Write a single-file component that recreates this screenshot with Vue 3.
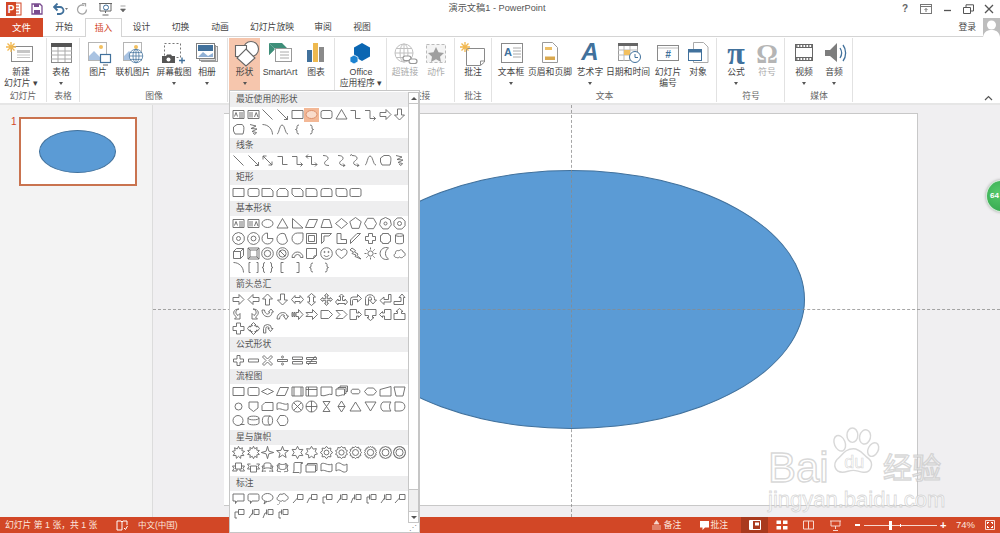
<script setup>
const c = (r, cx = 6.5, cy = 6.5, ry = r) => `M${cx - r} ${cy}a${r} ${ry} 0 1 0 ${2 * r} 0a${r} ${ry} 0 1 0 ${-2 * r} 0Z`
const poly = (n, r, rot = -90, cx = 6.5, cy = 6.5) => {
  let d = ''
  for (let i = 0; i < n; i++) {
    const a = ((rot + (360 * i) / n) * Math.PI) / 180
    d += `${i ? 'L' : 'M'}${(cx + r * Math.cos(a)).toFixed(2)} ${(cy + r * Math.sin(a)).toFixed(2)}`
  }
  return d + 'Z'
}
const star = (n, R, r) => {
  let d = ''
  for (let i = 0; i < n * 2; i++) {
    const a = ((-90 + (180 * i) / n) * Math.PI) / 180
    const q = i % 2 ? r : R
    d += `${i ? 'L' : 'M'}${(6.5 + q * Math.cos(a)).toFixed(2)} ${(6.5 + q * Math.sin(a)).toFixed(2)}`
  }
  return d + 'Z'
}
const S = {
  text: 'M1 2.5H12V10.5H1ZM2.5 8.5L4 4.5L5.5 8.5M7 5H11M7 7H11M7 9H11',
  vtext: 'M1 2.5H12V10.5H1ZM3 4V9.5M5 4V9.5M7.5 9L9.2 4.5L11 9',
  line: 'M1.5 1.5L11.5 11.5',
  arrow: 'M1.5 1.5L11.5 11.5M11.5 8V11.5H8',
  dbl: 'M2 2L11 11M2 5.5V2H5.5M11 7.5V11H7.5',
  elbow: 'M1.5 2.5H6.5V10.5H11.5',
  elbowa: 'M1 2.5H6V10.5H11.5M9.5 8.5L11.5 10.5L9.5 12.5',
  elbowd: 'M3 .5L1 2.5L3 4.5M1 2.5H6.5V10.5H12M10 8.5L12 10.5L10 12.5',
  curvec: 'M3 1.5C9 1.5 9 5 6.5 6.5S3 11.5 9 11.5',
  curvea: 'M3 1.5C9 1.5 9 5 6.5 6.5S3 11.5 10 11.5M8 9.5L10 11.5L8 12.5',
  curved: 'M1 1.5L3 .5M3 1.5C9 1.5 9 5 6.5 6.5S3 11.5 10 11.5M8 9.5L10 11.5L8 12.5',
  rect: 'M1 2.5H12V10.5H1Z',
  round: 'M3 2.5H10Q12 2.5 12 4.5V8.5Q12 10.5 10 10.5H3Q1 10.5 1 8.5V4.5Q1 2.5 3 2.5Z',
  snip1: 'M1 2.5H9.5L12 5V10.5H1Z',
  snip2: 'M3.5 2.5H9.5L12 5V10.5H1V5Z',
  snip3: 'M1 2.5H9.5L12 5V10.5H3.5L1 8Z',
  rs1: 'M1 2.5H9Q12 2.5 12 5.5V10.5H1Z',
  rs2: 'M3.5 2.5H9.5Q12 2.5 12 5V10.5H1V5Q1 2.5 3.5 2.5Z',
  rs3: 'M1 2.5H9.5Q12 2.5 12 5V10.5H3.5Q1 10.5 1 8Z',
  ellipse: c(5.5, 6.5, 6.5, 4),
  tri: 'M6.5 1.5L12 11H1Z',
  rtri: 'M1.5 1.5L12 11H1.5Z',
  para: 'M4 2.5H12.5L9 10.5H.5Z',
  trap: 'M3.5 2.5H9.5L12 10.5H1Z',
  dia: 'M6.5 1.5L12.5 6.5L6.5 11.5L.5 6.5Z',
  pent: poly(5, 6),
  hex: poly(6, 6, 0),
  c7: poly(7, 6) + c(1.5),
  c8: poly(8, 6, -67.5) + c(2),
  c10: poly(10, 6) + c(2),
  c12: poly(12, 6) + c(2.4),
  pie: 'M6.5 1A5.5 5.5 0 1 0 12 6.5H6.5Z',
  chord: 'M9 2A5.5 5.5 0 1 0 11.5 9Z',
  tear: 'M12 1V6.5A5.5 5.5 0 1 1 6.5 1Z',
  frame: 'M1.5 1.5H11.5V11.5H1.5ZM3.5 3.5H9.5V9.5H3.5Z',
  halff: 'M1.5 1.5H11.5L9 4H4V9L1.5 11.5Z',
  ell: 'M2 1.5H6V7.5H11.5V11.5H2Z',
  stripe: 'M1.5 8L8 1.5H11.5L1.5 11.5Z',
  cross: 'M4.5 1.5H8.5V4.5H11.5V8.5H8.5V11.5H4.5V8.5H1.5V4.5H4.5Z',
  plaque: 'M3.5 1.5H9.5Q9.5 3.5 11.5 3.5V9.5Q9.5 9.5 9.5 11.5H3.5Q3.5 9.5 1.5 9.5V3.5Q3.5 3.5 3.5 1.5Z',
  can: 'M2.5 3V10.5C2.5 12.2 10.5 12.2 10.5 10.5V3C10.5 1.2 2.5 1.2 2.5 3C2.5 4.8 10.5 4.8 10.5 3',
  cube: 'M1.5 4.5L4.5 1.5H11.5V8.5L8.5 11.5H1.5ZM1.5 4.5H8.5V11.5M8.5 4.5L11.5 1.5',
  bevel: 'M1 1H12V12H1ZM3 3H10V10H3ZM1 1L3 3M12 1L10 3M1 12L3 10M12 12L10 10',
  donut: c(5.8) + c(3.2),
  nosym: c(5.8) + c(3.6) + 'M4 4L9 9',
  arcb: 'M1 10.5A5.5 5.5 0 0 1 12 10.5H9.5A3 3 0 0 0 3.5 10.5Z',
  fold: 'M1.5 1.5H11.5V8.5L8.5 11.5H1.5ZM8.5 11.5L9 9L11.5 8.5',
  smile: c(5.8) + c(.6, 4.5, 5) + c(.6, 8.5, 5) + 'M3.8 8C5 10 8 10 9.2 8',
  heart: 'M6.5 11.5C1 8 .5 5.5 1.2 3.8C2.2 1.5 5.5 1.5 6.5 4C7.5 1.5 10.8 1.5 11.8 3.8C12.5 5.5 12 8 6.5 11.5Z',
  bolt: 'M3 1L6.5 3.5L5.5 5L9 7L8 8.5L12 12L6 9.5L7 8L3 6.5L4.5 5L1 3Z',
  sun: c(2.6) + 'M6.5 .5V2.5M6.5 10.5V12.5M.5 6.5H2.5M10.5 6.5H12.5M2.3 2.3L3.7 3.7M9.3 9.3L10.7 10.7M2.3 10.7L3.7 9.3M9.3 3.7L10.7 2.3',
  moon: 'M9.5 1A6 6 0 1 0 9.5 12A6.5 6.5 0 0 1 9.5 1Z',
  cloud: 'M3.5 10.5C.5 10.5 .5 7 2.5 6.5C2 3.5 5 3 6 4C7 2 10 2.5 10 5C12.5 5 13 9 10.5 9.5C9.5 11 7.5 11 6.5 10C5.5 11 4.5 11 3.5 10.5Z',
  arc: 'M1.5 1.5C7 1.5 11.5 6 11.5 11.5',
  bpair: 'M3.5 1.5H2V11.5H3.5M9.5 1.5H11V11.5H9.5',
  brpair: 'M4 1.5Q2.5 1.5 2.5 3V5Q2.5 6.5 1 6.5Q2.5 6.5 2.5 8V10Q2.5 11.5 4 11.5M9 1.5Q10.5 1.5 10.5 3V5Q10.5 6.5 12 6.5Q10.5 6.5 10.5 8V10Q10.5 11.5 9 11.5',
  lb: 'M7.5 1.5H5V11.5H7.5',
  rb: 'M5.5 1.5H8V11.5H5.5',
  lc: 'M8 2Q6 2 6 3.5V5Q6 6.5 4.5 6.5Q6 6.5 6 8V9.5Q6 11 8 11',
  rc: 'M5 2Q7 2 7 3.5V5Q7 6.5 8.5 6.5Q7 6.5 7 8V9.5Q7 11 5 11',
  curve: 'M1 11C3 11 3.5 2 6 2C9 2 9 11 12 11',
  free: 'M1.5 4L5 1.5H10C12.5 2.5 12 6 11.5 9L11 11H3L1.5 8Z',
  scrib: 'M3 1.5L9 3L4 5.5L10 6L5 8.5L9.5 9.5L8 11.5L6 10',
  ar: 'M1 4.5H7V1.5L12 6.5L7 11.5V8.5H1Z',
  al: 'M12 4.5H6V1.5L1 6.5L6 11.5V8.5H12Z',
  au: 'M4.5 12V6H1.5L6.5 1L11.5 6H8.5V12Z',
  ad: 'M4.5 1V7H1.5L6.5 12L11.5 7H8.5V1Z',
  alr: 'M.5 6.5L4 2.5V4.5H9V2.5L12.5 6.5L9 10.5V8.5H4V10.5Z',
  aud: 'M6.5 .5L10.5 4H8.5V9H10.5L6.5 12.5L2.5 9H4.5V4H2.5Z',
  aq: 'M6.5 .5L8.5 2.8H7.3V5.7H10.2V4.5L12.5 6.5L10.2 8.5V7.3H7.3V10.2H8.5L6.5 12.5L4.5 10.2H5.7V7.3H2.8V8.5L.5 6.5L2.8 4.5V5.7H5.7V2.8H4.5Z',
  alru: 'M6.5 1L9 3.5H7.5V7.5H10V6L12.5 9L10 12V10.5H3V12L.5 9L3 6V7.5H5.5V3.5H4Z',
  abent: 'M1.5 12V6.5Q1.5 4 4 4H8.5V1.5L12.5 5.5L8.5 9V6.5H4.5Q3.5 6.5 3.5 7.5V12Z',
  auturn: 'M1.5 12V5.5C1.5 .5 10.5 .5 10.5 5.5V7H12.5L9 11L5.5 7H7.5V5.5C7.5 3.5 4.5 3.5 4.5 5.5V12Z',
  alu: 'M12 1.5V9H5V11.5L1 7.5L5 4V6.5H9.5V1.5Z',
  abu: 'M1 8.5H8V4.5H6L9 1L12 4.5H10.5V11.5H1Z',
  acr: 'M7 1C3 2 3 6 6 7.5L8 5.5V11H2.5L4.5 9C0 6 1 1 7 1Z',
  acl: 'M6 1C10 2 10 6 7 7.5L5 5.5V11H10.5L8.5 9C13 6 12 1 6 1Z',
  acu: 'M1 2C1 10 11 11 11 4H12.5L10 1L7.5 4H8.5C8.5 7 4 7 3.5 2Z',
  acd: 'M1 11C1 3 11 3 11 8H12.5L10 11.5L7.5 8H8.5C8.5 6 4 6 3.5 11Z',
  astr: 'M1 4.5H2V8.5H1ZM3 4.5H4V8.5H3ZM5 4.5H7.5V1.5L12 6.5L7.5 11.5V8.5H5Z',
  anot: 'M1 4.5H7.5V1.5L12.5 6.5L7.5 11.5V8.5H1L3 6.5Z',
  home: 'M1 2.5H8.5L12.5 6.5L8.5 10.5H1Z',
  chev: 'M1 2.5H8L12 6.5L8 10.5H1L5 6.5Z',
  cr: 'M1 1.5H7.5V5H9.5V3.5L12.5 6.5L9.5 9.5V8H7.5V11.5H1Z',
  cd: 'M1 1.5H12V7.5H8.5V9.5H10L6.5 12.5L3 9.5H4.5V7.5H1Z',
  cl: 'M12 1.5H5.5V5H3.5V3.5L.5 6.5L3.5 9.5V8H5.5V11.5H12Z',
  cu: 'M1 5.5H4.5V3.5H3L6.5 .5L10 3.5H8.5V5.5H12V11.5H1Z',
  plusb: 'M4.5 1H8.5V4.5H12V8.5H8.5V12H4.5V8.5H1V4.5H4.5Z',
  cq: 'M6.5 .5L9 3H7.8V4H9.5V5H10.3V3.8L12.5 6.5L10.3 9.2V8H9.5V9.5H7.8V10H9L6.5 12.5L4 10H5.2V9.5H3.5V8H2.7V9.2L.5 6.5L2.7 3.8V5H3.5V4H5.2V3H4Z',
  circ: 'M2.5 11V6.5A4 4 0 0 1 10.5 6.5H12L9.5 9.5L7 6.5H8.2A1.7 1.7 0 0 0 4.8 6.5V11Z',
  eplus: 'M5 1.5H8V5H11.5V8H8V11.5H5V8H1.5V5H5Z',
  eminus: 'M1.5 5H11.5V8H1.5Z',
  etimes: 'M3 1.5L6.5 5L10 1.5L11.5 3L8 6.5L11.5 10L10 11.5L6.5 8L3 11.5L1.5 10L5 6.5L1.5 3Z',
  ediv: 'M1.5 5.5H11.5V7.5H1.5Z' + c(1, 6.5, 3) + c(1, 6.5, 10),
  eeq: 'M1.5 3H11.5V5.5H1.5ZM1.5 7.5H11.5V10H1.5Z',
  ene: 'M1.5 3.5H11.5V5.5H1.5ZM1.5 7.5H11.5V9.5H1.5ZM3 11L10.5 2',
  falt: 'M2.5 2.5H10.5Q12 2.5 12 4V9Q12 10.5 10.5 10.5H2.5Q1 10.5 1 9V4Q1 2.5 2.5 2.5Z',
  fdia: 'M6.5 3.5L12.5 6.5L6.5 9.5L.5 6.5Z',
  fpre: 'M1 2H12V11H1ZM3 2V11M10 2V11',
  fint: 'M1 2H12V11H1ZM1 4.5H12M3.5 2V11',
  fdoc: 'M1 2H12V9.5C9 8 5 12 1 10.5Z',
  fmulti: 'M1 4H9.5V10C7 9 4 12 1 10.5ZM3 4V2.5H11V8.5H9.5M5 2.5V1H12.5V6.5H11',
  fterm: 'M4 4.2H9C11.5 4.2 11.5 8.8 9 8.8H4C1.5 8.8 1.5 4.2 4 4.2Z',
  fprep: 'M3.5 3H9.5L12.5 6.5L9.5 10H3.5L.5 6.5Z',
  fmin: 'M1 4.5L12 1.5V11H1Z',
  fman: 'M1 2H12L10 11H3Z',
  fcon: c(3.5),
  foff: 'M2 2H11V8L6.5 11.5L2 8Z',
  fcard: 'M4 2.5H12V10.5H1V5.5Z',
  ftape: 'M1 3.5C4 1 9 6 12 3.5V9.5C9 12 4 7 1 9.5Z',
  fsum: c(5.5) + 'M2.6 2.6L10.4 10.4M10.4 2.6L2.6 10.4',
  for: c(5.5) + 'M1 6.5H12M6.5 1V12',
  fcol: 'M3 1.5H10L3 11.5H10Z',
  fsort: 'M6.5 1L10 6.5L6.5 12L3 6.5ZM3 6.5H10',
  fext: 'M6.5 2L12 11H1Z',
  fmer: 'M1 2H12L6.5 11Z',
  fsto: 'M4 2H12C10 4 10 9 12 11H4C1 9 1 4 4 2Z',
  fdel: 'M2 2H7C13.5 2 13.5 11 7 11H2Z',
  fq: c(5, 6, 6.5) + 'M8 10.5H12.5',
  fdisk: 'M1 4C1 1.5 12 1.5 12 4V9C12 11.5 1 11.5 1 9ZM1 4C1 6.5 12 6.5 12 4',
  fdir: 'M4 2H9C12.5 2 12.5 11 9 11H4C.5 11 .5 2 4 2ZM9 2C6.5 2 6.5 11 9 11',
  fdisp: 'M4 1.5H8.5C13 3 13 10 8.5 11.5H4L1 6.5Z',
  ex1: star(9, 6.2, 3.8),
  ex2: star(10, 6.2, 4),
  s4: star(4, 6.2, 1.9),
  s5: star(5, 6.2, 2.6),
  s6: star(6, 6.2, 3.4),
  s7: star(7, 6.2, 3.8),
  s8: star(8, 6.2, 4.4) + c(2.4),
  s10: star(10, 6.2, 4.8) + c(2.6),
  s12: star(12, 6.2, 5) + c(3),
  s16: star(16, 6.2, 5.2) + c(3.2),
  s24: star(24, 6.2, 5.4) + c(3.4),
  s32: star(32, 6.2, 5.4) + c(3.6),
  rib1: 'M3.5 2H9.5V8H3.5ZM3.5 5H.5L2 7.5L.5 10H5V8M9.5 5H12.5L11 7.5L12.5 10H8V8',
  rib2: 'M3.5 5H9.5V11H3.5ZM3.5 3H.5L2 5.5L.5 8H3.5M9.5 3H12.5L11 5.5L12.5 8H9.5',
  rib3: 'M3 3C3 1.5 10 1.5 10 3V8C10 6.5 3 6.5 3 8ZM3 5H1L2 8L1 10.5C3 9.5 4 10.5 5 10M10 5H12L11 8L12 10.5C10 9.5 9 10.5 8 10',
  rib4: 'M3 7C3 9 10 9 10 7V2C10 4 3 4 3 2ZM3 4H1L2 7L1 10C3 11 4 10 5 11M10 4H12L11 7L12 10C10 11 9 10 8 11',
  sv: 'M4 1.5H11.5V2.5H10V11C10 12.5 8.5 12.5 8 11.5H2C2.5 11 3 10 3 9V2.5C3 1.8 3.5 1.5 4 1.5Z',
  sh: 'M1 4H2.5V2.5H12V9.5H10.5V11H1ZM2.5 4H10.5V9.5',
  wave: 'M1 3C4 .5 8 5.5 12 3V10C8 12.5 4 7.5 1 10Z',
  wave2: 'M1 3C3 1.5 4.5 1.5 6.5 3S10 4.5 12 3V10C10 11.5 8.5 11.5 6.5 10S3 8.5 1 10Z',
  cal1: 'M1 2H12V9H5L3.5 11.5V9H1Z',
  cal2: 'M2.5 2H10.5Q12 2 12 3.5V7.5Q12 9 10.5 9H5L3.5 11.5V9H2.5Q1 9 1 7.5V3.5Q1 2 2.5 2Z',
  cal3: c(5.5, 6.5, 5.5, 4) + 'M4 9L3 12L6 9.5',
  cal4: 'M3 8.5C.5 8.5 .5 5 2.5 4.5C2.5 2 5 1.5 6 2.5C7 1 10 1.5 10 3.5C12.5 3.5 13 7.5 10.5 8C9.5 9.5 7.5 9.5 6.5 8.5C5.5 9.5 4 9.5 3 8.5ZM3 11H4M1.5 12.5H2.5',
  ln1: 'M6.5 2.5H12V7.5H6.5ZM6.5 6L2 11',
  ln2: 'M6.5 2.5H12V7.5H6.5ZM6.5 6H4.5L2 11',
  ln3: 'M6.5 2.5H12V7.5H6.5ZM6.5 5H3V11H5',
  ac1: 'M7 2.5H12V7.5H7ZM5.5 2.5V7.5M5.5 6L2 11',
  ac2: 'M7 2.5H12V7.5H7ZM5.5 2.5V7.5M5.5 6H4L2 11',
  ac3: 'M7 2.5H12V7.5H7ZM5.5 2.5V7.5M5.5 5H3V11H5',
  bd1: 'M7 2.5H12V7.5H7M7 2.5V7.5M5.5 2.5V7.5M5.5 6L2 11'
}
const sections = [
  { title: '最近使用的形状', items: ['text', 'vtext', 'line', 'arrow', 'rect', 'ellipse', 'round', 'tri', 'elbow', 'elbowa', 'ar', 'ad', 'free', 'scrib', 'arc', 'curve', 'lc', 'rc'] },
  { title: '线条', items: ['line', 'arrow', 'dbl', 'elbow', 'elbowa', 'elbowd', 'curvec', 'curvea', 'curved', 'curve', 'free', 'scrib'] },
  { title: '矩形', items: ['rect', 'round', 'snip1', 'snip2', 'snip3', 'rs1', 'rs2', 'rs3', 'falt'] },
  { title: '基本形状', items: ['text', 'vtext', 'ellipse', 'tri', 'rtri', 'para', 'trap', 'dia', 'pent', 'hex', 'c7', 'c8', 'c10', 'c12', 'pie', 'chord', 'tear', 'frame', 'halff', 'ell', 'stripe', 'cross', 'plaque', 'can', 'cube', 'bevel', 'donut', 'nosym', 'arcb', 'fold', 'smile', 'heart', 'bolt', 'sun', 'moon', 'cloud', 'arc', 'bpair', 'brpair', 'lb', 'rb', 'lc', 'rc'] },
  { title: '箭头总汇', items: ['ar', 'al', 'au', 'ad', 'alr', 'aud', 'aq', 'alru', 'abent', 'auturn', 'alu', 'abu', 'acr', 'acl', 'acu', 'acd', 'astr', 'anot', 'home', 'chev', 'cr', 'cd', 'cl', 'cu', 'plusb', 'cq', 'circ'] },
  { title: '公式形状', items: ['eplus', 'eminus', 'etimes', 'ediv', 'eeq', 'ene'] },
  { title: '流程图', items: ['rect', 'falt', 'fdia', 'para', 'fpre', 'fint', 'fdoc', 'fmulti', 'fterm', 'fprep', 'fmin', 'fman', 'fcon', 'foff', 'fcard', 'ftape', 'fsum', 'for', 'fcol', 'fsort', 'fext', 'fmer', 'fsto', 'fdel', 'fq', 'fdisk', 'fdir', 'fdisp'] },
  { title: '星与旗帜', items: ['ex1', 'ex2', 's4', 's5', 's6', 's7', 's8', 's10', 's12', 's16', 's24', 's32', 'rib1', 'rib2', 'rib3', 'rib4', 'sv', 'sh', 'wave', 'wave2'] },
  { title: '标注', items: ['cal1', 'cal2', 'cal3', 'cal4', 'ln1', 'ln2', 'ln3', 'ac1', 'ac2', 'ac3', 'bd1', 'ln1', 'ln3', 'ac1', 'ac2', 'ac3'] }
]
const sun = '<path d="M6 2v10M1 7h10M2.5 3.5l7 7M9.5 3.5l-7 7" stroke="#f2b84f" stroke-width="1.3" fill="none"/>'
const globe = (s, x = 12, y = 12) => `<g fill="#fff" stroke="${s}" stroke-width="1"><circle cx="${x}" cy="${y}" r="9"/><ellipse cx="${x}" cy="${y}" rx="4" ry="9"/><path d="M${x - 9} ${y}h18M${x} ${y - 9}v18M${x - 8} ${y - 4.5}h16M${x - 8} ${y + 4.5}h16" fill="none"/></g>`
const icons = {
  newslide: `<rect x="6.5" y="6.5" width="21" height="15" fill="#fff" stroke="#8a8a8a"/><rect x="12" y="10" width="13" height="3" fill="#c5c5c5"/><path d="M12 15h13M12 17.5h13" stroke="#c5c5c5"/>${sun}`,
  table: '<rect x="6.5" y="3.5" width="20" height="19" fill="#fff" stroke="#8a8a8a"/><rect x="6" y="3" width="21" height="4" fill="#555"/><path d="M6 11h21M6 15h21M6 19h21M13 7v15M20 7v15" stroke="#aaa"/>',
  pic: '<rect x="6.5" y="2.5" width="18" height="18" fill="#fff" stroke="#b5b5b5"/><path d="M7 20v-4l5-5 6 6 3-2 3 5z" fill="#a9c3e2"/><circle cx="19" cy="7" r="2" fill="#f2c060"/><rect x="18.5" y="14.5" width="10" height="8" fill="#fff" stroke="#41719c" stroke-width="1.2"/><path d="M21 25h5" stroke="#666"/>',
  online: `<rect x="6.5" y="2.5" width="18" height="18" fill="#fff" stroke="#b5b5b5"/><path d="M7 20v-4l5-5 6 6 3-2 3 5z" fill="#a9c3e2"/><circle cx="19" cy="7" r="2" fill="#f2c060"/><g transform="translate(10 7) scale(.75)">${globe('#41719c')}</g>`,
  screen: '<rect x="6.5" y="3.5" width="16" height="14" fill="none" stroke="#777" stroke-dasharray="2 2"/><path d="M4 16h4l1-1.5h4l1 1.5h3v7H4z" fill="#555"/><circle cx="10.5" cy="19.5" r="2" fill="#fff"/><path d="M24 17.5v6M21 20.5h6" stroke="#41719c" stroke-width="1.4"/>',
  album: '<rect x="10.5" y="6.5" width="16" height="15" fill="#eee" stroke="#9a9a9a"/><rect x="8.5" y="5.5" width="16" height="15" fill="#ddd" stroke="#9a9a9a"/><rect x="5.5" y="3.5" width="18" height="15" fill="#fff" stroke="#7f7f7f"/><rect x="7" y="5" width="15" height="6" fill="#41719c"/><path d="M7 17l5-5 5 4 5-3v4z" fill="#8fb0d5"/>',
  shapes: '<circle cx="22" cy="9" r="7.5" fill="#fff" stroke="#666" stroke-width="1.1"/><path d="M6.5 5.5h11v11h-11z" fill="#fff" stroke="#666" stroke-width="1.1"/><path d="M17 9l9 9-9 8-9-8z" fill="#fff" stroke="#666" stroke-width="1.1"/>',
  smart: '<path d="M5 3h13l5 5H10l-5-5zM5 15l5-5h-5z" fill="#3e8e79"/><path d="M5 3l6 6-6 6z" fill="#3e8e79"/><rect x="11.5" y="8.5" width="16" height="13" fill="#fff" stroke="#999"/><path d="M16 12h9M16 15h9M16 18h9" stroke="#aaa"/>',
  chart: '<rect x="7" y="10" width="5" height="12" fill="#41719c"/><rect x="13" y="3" width="5" height="19" fill="#eeb94f"/><rect x="19" y="7" width="5" height="15" fill="#8a8a8a"/>',
  office: '<path d="M17 3l8 4.5v9L17 21l-8-4.5v-9z" fill="#0b66b2"/><path d="M9 15l4 2.2v4.6L9 24l-4-2.2v-4.6z" fill="#1c83d1" stroke="#fff" stroke-width=".8"/>',
  link: `<g transform="translate(3 1)">${globe('#c0c0c0')}</g><rect x="14" y="16" width="8" height="4.5" rx="2.2" fill="#fff" stroke="#999" stroke-width="1.2"/><rect x="20" y="19" width="8" height="4.5" rx="2.2" fill="#fff" stroke="#999" stroke-width="1.2"/>`,
  action: '<rect x="6.5" y="4.5" width="19" height="18" fill="#f4f4f4" stroke="#bbb" stroke-dasharray="3 2"/><path d="M16 7l2.5 5.3 5.5.7-4 3.8 1 5.2-5-2.7-5 2.7 1-5.2-4-3.8 5.5-.7z" fill="#9f9f9f"/>',
  comment: `<path d="M9.5 8.5h18v13.5l-4 3.5h-14z" fill="#fff" stroke="#8a8a8a"/><path d="M23.5 25v-4h4" fill="none" stroke="#8a8a8a"/><g transform="translate(2 0)">${sun}</g>`,
  textbox: '<rect x="6.5" y="3.5" width="21" height="19" fill="#fff" stroke="#8a8a8a"/><text x="9" y="16" font-family="Liberation Sans" font-size="11" font-weight="700" fill="#41719c">A</text><path d="M18 8h8M18 11h8M18 14h8M18 17h8" stroke="#aaa"/>',
  header: '<path d="M8.5 2.5h10l5 5v15h-15z" fill="#fff" stroke="#9a9a9a"/><rect x="11" y="7" width="7" height="3" fill="#eec067"/><rect x="11" y="16.5" width="10" height="3.5" fill="#d9a84e"/>',
  wordart: '<text x="16" y="20" text-anchor="middle" font-family="Liberation Sans" font-style="italic" font-weight="700" font-size="24" fill="#41719c">A</text>',
  date: '<rect x="6.5" y="3.5" width="19" height="17" fill="#fff" stroke="#999"/><rect x="6" y="3" width="20" height="3" fill="#666"/><path d="M6 10h20M6 15h20M12 6v15M18 6v15" stroke="#bbb"/><rect x="12" y="10" width="6" height="5" fill="#f2c060"/><circle cx="23" cy="17" r="5.5" fill="#fff" stroke="#41719c"/><path d="M23 14v3.5h3" fill="none" stroke="#41719c"/>',
  number: '<rect x="5.5" y="5.5" width="21" height="15" fill="#fff" stroke="#8a8a8a"/><path d="M6 8h20" stroke="#bbb"/><text x="16" y="18" text-anchor="middle" font-family="Liberation Sans" font-style="italic" font-weight="700" font-size="10" fill="#41719c">#</text>',
  object: '<path d="M11.5 2.5h10l4.5 4.5v15.5h-14.5z" fill="#fff" stroke="#aaa"/><rect x="6.5" y="9.5" width="13" height="11" fill="#fff" stroke="#41719c"/><rect x="6" y="9" width="14" height="3.5" fill="#41719c"/>',
  pi: '<text x="16" y="24" text-anchor="middle" font-family="Liberation Serif" font-weight="700" font-size="32" fill="#41719c">π</text>',
  omega: '<text x="16" y="23" text-anchor="middle" font-family="Liberation Serif" font-weight="700" font-size="27" fill="#b5b5b5">Ω</text>',
  video: '<rect x="7.5" y="4.5" width="17" height="16" fill="#fff" stroke="#666"/><path d="M7 7.5h18M7 17.5h18" stroke="#666"/><path d="M8 6h16M8 19h16" stroke="#555" stroke-width="1.5" stroke-dasharray="1.5 1.5"/>',
  audio: '<path d="M7 10h5l7-7v19l-7-6H7z" fill="#7d7d7d"/><path d="M22 8c2 3 2 7 0 10M25 5c3.5 4.5 3.5 11.5 0 16" fill="none" stroke="#41719c" stroke-width="1.3"/>'
}
const groups = [
  { w: 47, pad: 0, label: '幻灯片', items: [{ w: 42, i: 'newslide', t: ['新建', '幻灯片 ▾'] }] },
  { w: 33, pad: 0, label: '表格', items: [{ w: 28, i: 'table', t: ['表格'], drop: 1 }] },
  { w: 148, pad: 1, label: '图像', items: [{ w: 34, i: 'pic', t: ['图片'] }, { w: 36, i: 'online', t: ['联机图片'] }, { w: 46, i: 'screen', t: ['屏幕截图'], drop: 1 }, { w: 20, i: 'album', t: ['相册'], drop: 1 }] },
  { w: 107, pad: 1, label: '', items: [{ w: 31, i: 'shapes', t: ['形状'], drop: 1, on: 1 }, { w: 40, i: 'smart', t: ['SmartArt'] }, { w: 32, i: 'chart', t: ['图表'] }] },
  { w: 52, pad: 2, label: '', items: [{ w: 48, i: 'office', t: ['Office', '应用程序 ▾'] }] },
  { w: 68, pad: 2, label: '链接', items: [{ w: 32, i: 'link', t: ['超链接'], off: 1 }, { w: 30, i: 'action', t: ['动作'], off: 1 }] },
  { w: 37, pad: 0, label: '批注', items: [{ w: 36, i: 'comment', t: ['批注'] }] },
  { w: 225, pad: 1, label: '文本', items: [{ w: 36, i: 'textbox', t: ['文本框'], drop: 1 }, { w: 42, i: 'header', t: ['页眉和页脚'] }, { w: 38, i: 'wordart', t: ['艺术字'], drop: 1 }, { w: 38, i: 'date', t: ['日期和时间'] }, { w: 42, i: 'number', t: ['幻灯片', '编号'] }, { w: 18, i: 'object', t: ['对象'] }] },
  { w: 68, pad: 1, label: '符号', items: [{ w: 36, i: 'pi', t: ['公式'], drop: 1 }, { w: 26, i: 'omega', t: ['符号'], off: 1 }] },
  { w: 68, pad: 1, label: '媒体', items: [{ w: 36, i: 'video', t: ['视频'], drop: 1 }, { w: 24, i: 'audio', t: ['音频'], drop: 1 }] }
]
const tabs = [
  { t: '开始', w: 42 }, { t: '插入', w: 37, on: 1 }, { t: '设计', w: 39 }, { t: '切换', w: 39 }, { t: '动画', w: 40 }, { t: '幻灯片放映', w: 64 }, { t: '审阅', w: 38 }, { t: '视图', w: 40 }
]
</script>

<template>
  <div class="win">
    <header class="titlebar">
      <div class="qat">
        <svg width="16" height="14" viewBox="0 0 16 14" class="qp"><rect x="5" y="1" width="10" height="12" fill="#fff" stroke="#d24726"/><path d="M9 4h4M9 7h4M9 10h4" stroke="#d24726"/><rect y="0" width="10" height="14" fill="#d24726"/><text x="5" y="11" text-anchor="middle" font-family="Liberation Sans" font-weight="700" font-size="10" fill="#fff">P</text></svg>
        <svg width="12" height="12" viewBox="0 0 12 12" class="qs"><path d="M1 1h8l2 2v8H1z" fill="#fff" stroke="#7a4d90" stroke-width="1.3"/><rect x="3" y="1" width="5" height="3" fill="#7a4d90"/><rect x="3" y="7" width="6" height="4" fill="#7a4d90"/></svg>
        <svg width="16" height="12" viewBox="0 0 16 12" class="qu"><path d="M1 4h6a3.5 3.5 0 0 1 0 7H4" fill="none" stroke="#41719c" stroke-width="1.8"/><path d="M4.5 .5L1 4l3.5 3.5" fill="none" stroke="#41719c" stroke-width="1.8"/><path d="M12 5h3l-1.5 2z" fill="#777"/></svg>
        <svg width="12" height="12" viewBox="0 0 12 12" class="qr"><path d="M8 2.5A4.5 4.5 0 1 0 10.5 6.5" fill="none" stroke="#a5a5a5" stroke-width="1.3"/><path d="M6 .5h3.5v3" fill="none" stroke="#a5a5a5" stroke-width="1.3"/></svg>
        <svg width="16" height="14" viewBox="0 0 16 14" class="qv"><path d="M1 1.5h13M2 2v7h11V2M7.5 9v2M4.5 13h6" fill="none" stroke="#666"/><circle cx="8" cy="5.5" r="2.5" fill="none" stroke="#41719c"/></svg>
        <svg width="6" height="8" viewBox="0 0 6 8" class="qc"><path d="M.5 1h5M.5 4h5l-2.5 3z" fill="#666" stroke="#666" stroke-width=".6"/></svg>
      </div>
      <div class="doc">演示文稿1 - PowerPoint</div>
      <div class="winbtns">
        <span class="help">?</span>
        <svg width="12" height="10" viewBox="0 0 12 10"><rect x=".5" y=".5" width="11" height="9" fill="none" stroke="#777"/><path d="M.5 2.5h11M6 8V4.5M4.5 6L6 4.5 7.5 6" fill="none" stroke="#777"/></svg>
        <svg width="11" height="10" viewBox="0 0 11 10"><path d="M2 6.5h7" stroke="#555" stroke-width="1.3"/></svg>
        <svg width="11" height="10" viewBox="0 0 11 10"><path d="M.5 3.5h7v6h-7zM3 3V.8h7.5V7H8" fill="none" stroke="#555"/></svg>
        <svg width="10" height="10" viewBox="0 0 10 10"><path d="M1 1l8 8M9 1l-8 8" stroke="#555" stroke-width="1.3"/></svg>
      </div>
    </header>

    <nav class="tabs">
      <div class="file">文件</div>
      <div v-for="t in tabs" :key="t.t" class="tab" :class="{ on: t.on }" :style="{ width: t.w + 'px' }">{{ t.t }}</div>
      <div class="login">登录</div>
      <svg class="avatar" width="17" height="19" viewBox="0 0 17 19"><rect width="17" height="19" fill="#bdbdbd"/><circle cx="8.5" cy="7" r="4.5" fill="#fff"/><path d="M0 19c1-6 5-7 8.5-7s7.5 1 8.5 7z" fill="#fff"/></svg>
    </nav>

    <section class="ribbon">
      <div v-for="(g, gi) in groups" :key="gi" class="group" :style="{ width: g.w + 'px', paddingLeft: g.pad + 'px' }">
        <div class="items">
          <div v-for="it in g.items" :key="it.i" class="item" :class="{ on: it.on, off: it.off }" :style="{ width: it.w + 'px' }">
            <svg class="ricon" width="32" height="28" viewBox="0 0 32 28" v-html="icons[it.i]"></svg>
            <span v-for="l in it.t" :key="l" class="lbl">{{ l }}</span>
            <span v-if="it.drop" class="drop"></span>
          </div>
        </div>
        <div class="glabel">{{ g.label }}</div>
      </div>
      <svg class="collapse" width="9" height="6" viewBox="0 0 9 6"><path d="M1 5l3.5-3.5L8 5" fill="none" stroke="#555" stroke-width="1.2"/></svg>
    </section>

    <main class="main">
      <aside class="thumbs">
        <span class="num">1</span>
        <div class="thumb"><div class="thumb-oval"></div></div>
      </aside>
      <div class="editor">
        <div class="slide">
          <div class="oval"></div>
        </div>
        <div class="guide-v"></div>
        <div class="guide-h"></div>
      </div>
    </main>

    <footer class="status">
      <span class="st-a">幻灯片 第 1 张，共 1 张</span>
      <svg class="st-book" width="12" height="11" viewBox="0 0 12 11"><path d="M1 1h4l1 1v8H1zM6 2l1-1h4v4M8 8l1.5 1.5L11.5 6" fill="none" stroke="#fff"/></svg>
      <span class="st-lang">中文(中国)</span>
      <span class="grow"></span>
      <svg width="9" height="10" viewBox="0 0 9 10"><path d="M4.5 .5L7 4H2zM0 6h9M0 8h9M0 10h9" fill="#f7d8cf" stroke="#f7d8cf" stroke-width=".8"/></svg>
      <span class="st-note">备注</span>
      <svg class="st-cm" width="9" height="9" viewBox="0 0 9 9"><path d="M0 0h9v6.5H5L2.5 9V6.5H0z" fill="#fff"/></svg>
      <span class="st-cmt">批注</span>
      <div class="view on"><svg width="12" height="10" viewBox="0 0 12 10"><path d="M.5.5h11v9H.5z" fill="none" stroke="#fff"/><rect x="1" y="1" width="3" height="8" fill="#fff"/><rect x="6" y="2.5" width="4" height="3" fill="#fff"/></svg></div>
      <div class="view"><svg width="12" height="10" viewBox="0 0 12 10"><path d="M.5.5h4.5v3.5H.5zM7 .5h4.5v3.5H7zM.5 6h4.5v3.5H.5zM7 6h4.5v3.5H7z" fill="#fff"/></svg></div>
      <div class="view"><svg width="11" height="10" viewBox="0 0 11 10"><path d="M.5 1h10v8H.5zM5.5 1v8" fill="none" stroke="#f7d8cf"/></svg></div>
      <div class="view"><svg width="11" height="11" viewBox="0 0 11 11"><path d="M0 1h11M1 1v5h9V1M5.5 6v3M3 10.5h5" fill="none" stroke="#f7d8cf"/></svg></div>
      <span class="zoom-minus"></span>
      <div class="slider"><span class="tick"></span><span class="knob"></span></div>
      <span class="zoom-plus">+</span>
      <span class="pct">74%</span>
      <svg class="fit" width="10" height="10" viewBox="0 0 10 10"><path d="M.5.5h9v9h-9z" fill="none" stroke="#f7d8cf"/><path d="M2 2h2v1H3v1H2zM8 2v2H7V3H6V2zM2 8V6h1v1h1v1zM8 8H6V7h1V6h1z" fill="#fff"/></svg>
    </footer>

    <div class="menu">
      <div class="menu-body">
        <div class="gallery">
          <div v-for="s in sections" :key="s.title" class="sec">
            <div class="sec-h">{{ s.title }}</div>
            <div class="sec-b">
              <div v-for="(n, i) in s.items" :key="i" class="cell" :class="{ hit: s.title === '最近使用的形状' && n === 'ellipse' }">
                <svg width="13" height="13" viewBox="0 0 13 13"><path :d="S[n]" /></svg>
              </div>
            </div>
          </div>
        </div>
        <div class="scroll">
          <div class="sbtn"><span class="up"></span></div>
          <div class="sthumb"></div>
          <div class="strack"></div>
          <div class="sbtn"><span class="down"></span></div>
        </div>
      </div>
      <div class="grip">⋰</div>
    </div>

    <div class="badge">64</div>

    <div class="mark">
      <span class="mk-bai">Bai</span>
      <svg class="mk-paw" width="56" height="56" viewBox="0 0 62 62">
        <g fill="rgba(255,255,255,.6)" stroke="rgba(190,190,190,.6)" stroke-width="1.6">
          <ellipse cx="13" cy="18" rx="6" ry="9" transform="rotate(-22 13 18)"/>
          <ellipse cx="27" cy="9" rx="6" ry="8"/>
          <ellipse cx="41" cy="11" rx="6" ry="8" transform="rotate(14 41 11)"/>
          <ellipse cx="50" cy="25" rx="5.5" ry="8" transform="rotate(28 50 25)"/>
          <path d="M28 24c8 0 11 7 17 11 6 5 3 16-6 15-5-.5-7-2-11-2-5 0-7 2-12 2-8 0-11-8-6-14 6-5 9-12 18-12z"/>
        </g>
        <text x="29" y="45" text-anchor="middle" font-family="Liberation Sans" font-size="20" fill="rgba(255,255,255,.6)" stroke="rgba(190,190,190,.6)" stroke-width=".7">du</text>
      </svg>
      <span class="mk-jy">经验</span>
      <span class="mk-url">jingyan.baidu.com</span>
    </div>
  </div>
</template>

<style>
html, body { margin: 0; padding: 0; background: #fff; }
</style>

<style scoped>
.win { position: relative; width: 1000px; height: 533px; overflow: hidden; display: flex; flex-direction: column; background: #fff; font-family: "Liberation Sans", "Noto Sans CJK SC", sans-serif; color: #444; font-size: 8.8px; line-height: 1; }
.titlebar { height: 18px; display: flex; align-items: center; position: relative; flex: none; }
.qat { display: flex; align-items: center; width: 340px; }
.qat svg { flex: none; }
.qp { margin-left: 6px; }
.qs { margin-left: 9px; }
.qu { margin-left: 10px; }
.qr { margin-left: 7px; }
.qv { margin-left: 10px; }
.qc { margin-left: 6px; }
.doc { width: 314px; text-align: center; font-size: 9.2px; color: #555; }
.winbtns { flex: 1; display: flex; align-items: center; justify-content: flex-end; gap: 10px; padding-right: 6px; }
.help { font-weight: 700; font-size: 10px; color: #666; margin-right: 2px; }
.tabs { height: 19px; flex: none; display: flex; align-items: stretch; border-bottom: 1px solid #d4d4d4; box-sizing: border-box; position: relative; }
.file { width: 43px; background: #d24726; color: #fff; display: flex; align-items: center; justify-content: center; margin-bottom: -1px; font-size: 9.5px; }
.tab { display: flex; align-items: center; justify-content: center; box-sizing: border-box; font-size: 8.8px; }
.tab.on { color: #d24726; background: #fff; border: 1px solid #d4d4d4; border-bottom: 0; margin-bottom: -1px; }
.login { margin-left: auto; align-self: center; margin-right: 7px; font-size: 8.8px; }
.avatar { align-self: flex-start; }
.ribbon { height: 68px; flex: none; display: flex; align-items: stretch; position: relative; border-bottom: 2px solid #e6e6e6; box-sizing: border-box; }
.group { position: relative; box-sizing: border-box; flex: none; border-right: 1px solid #e2e2e2; margin: 1px 0 1px; display: flex; flex-direction: column; }
.items { display: flex; height: 52px; flex: none; }
.item { flex: none; display: flex; flex-direction: column; align-items: center; overflow: visible; height: 52px; white-space: nowrap; }
.item.on { background: #f6c6ad; }
.item.off .lbl { color: #aaa; }
.ricon { flex: none; margin: 2px -10px -1px; overflow: visible; display: block; }
.lbl { display: block; font-size: 8.8px; line-height: 11px; text-align: center; }
.drop { width: 0; height: 0; border: 2px solid transparent; border-top: 3px solid #555; margin-top: 4px; }
.glabel { height: 12px; line-height: 13px; text-align: center; font-size: 8.8px; color: #666; }
.collapse { position: absolute; right: 7px; top: 58px; }
.main { flex: 1; min-height: 0; display: flex; }
.thumbs { width: 141px; flex: none; border-right: 1px solid #dcdcdc; background: #f3f3f3; display: flex; align-items: flex-start; padding: 11px 0 0 11px; }
.num { color: #d24726; font-size: 10px; width: 8px; flex: none; line-height: 12px; }
.thumb { margin-top: 1px; width: 113.5px; height: 64.5px; background: #fff; border: 2.5px solid #c9734f; display: flex; align-items: center; justify-content: center; }
.thumb-oval { width: 77px; height: 43px; border-radius: 50%; background: #5b9bd5; border: 1px solid #41719c; box-sizing: border-box; }
.editor { flex: 1; position: relative; background: #f0eff1; overflow: hidden; }
.slide { position: relative; width: 693px; height: 391px; margin: 8px 0 0 71px; background: #fff; border: 1px solid #c8c8c8; border-left: 0; }
.oval { position: absolute; left: 113px; top: 56px; width: 468px; height: 259px; border-radius: 50%; background: #5b9bd5; border: 1px solid #41719c; box-sizing: border-box; }
.guide-v { position: absolute; left: 418px; top: 0; bottom: 0; border-left: 1px dashed #8a8a8a; opacity: .75; }
.guide-h { position: absolute; left: 0; right: 0; top: 204px; border-top: 1px dashed #8a8a8a; opacity: .75; }
.status { height: 16px; flex: none; background: #d24726; color: #fbe6df; display: flex; align-items: center; font-size: 8.8px; padding-left: 5px; white-space: nowrap; }
.st-a { width: 111px; }
.st-book { margin-right: 10px; }
.st-lang { width: 40px; font-size: 8.5px; }
.grow { flex: 1; }
.st-note { margin: 0 19px 0 3px; }
.st-cmt { margin: 0 13px 0 0; padding-left: 1px; }
.view { width: 27px; height: 16px; display: flex; align-items: center; justify-content: center; flex: none; }
.view.on { background: #a93a1e; }
.zoom-minus { width: 5px; height: 1.5px; background: #fff; margin-left: 6px; }
.slider { position: relative; width: 73px; height: 1px; background: #f7d8cf; margin-left: 4px; }
.knob { position: absolute; left: 25px; top: -4px; width: 3px; height: 9px; background: #fff; }
.tick { position: absolute; left: 36px; top: -1px; width: 1px; height: 3px; background: #fff; }
.zoom-plus { color: #fff; font-size: 11px; font-weight: 700; margin-left: 3px; width: 8px; }
.pct { margin-left: 8px; width: 24px; color: #fbe6df; font-size: 9.5px; }
.fit { margin: 0 5px; }
.menu { position: absolute; left: 229px; top: 90px; width: 191px; height: 443px; box-sizing: border-box; background: #fff; border: 1px solid #c6c6c6; display: flex; flex-direction: column; z-index: 2; }
.menu-body { flex: 1; min-height: 0; display: flex; }
.gallery { width: 178px; padding-top: 1px; flex: none; }
.sec-h { height: 15px; background: #eeeeef; padding-left: 6px; display: flex; align-items: center; font-size: 8.8px; color: #555; }
.sec-b { display: grid; grid-template-columns: repeat(12, 14.7px); grid-auto-rows: 14.7px; padding: .5px 0 1.25px 1px; }
.cell { display: flex; align-items: center; justify-content: center; }
.cell svg { fill: none; stroke: #666; stroke-width: .9; overflow: visible; }
.cell.hit { background: #f3b896; }
.cell.hit svg { fill: #f9dccb; stroke: #d98b66; }
.scroll { width: 11px; border-left: 1px solid #c6c6c6; border-right: 1px solid #c6c6c6; display: flex; flex-direction: column; box-sizing: border-box; margin-top: 1px; flex: none; }
.sbtn { height: 10px; border: 1px solid #c6c6c6; margin: 0 -1px; display: flex; align-items: center; justify-content: center; background: #fff; flex: none; }
.up { border: 3px solid transparent; border-bottom: 3px solid #555; border-top: 0; }
.down { border: 3px solid transparent; border-top: 3px solid #555; border-bottom: 0; }
.sthumb { height: 385px; border-bottom: 1px solid #c6c6c6; flex: none; }
.strack { flex: 1; background: #f0f0f0; }
.grip { height: 9px; text-align: right; font-size: 8px; line-height: 9px; color: #888; padding-right: 2px; flex: none; }
.badge { position: absolute; left: 986px; top: 180px; width: 30px; height: 32px; border-radius: 50%; background: radial-gradient(circle at 40% 40%, #55c96a, #2fa04a); border: 1.5px solid #cfe8d4; box-shadow: 0 0 3px #999; color: #fff; font-size: 8px; font-weight: 700; display: flex; align-items: center; padding-left: 3px; box-sizing: border-box; z-index: 3; }
.mark { position: absolute; left: 766px; top: 425px; width: 180px; height: 88px; z-index: 1; color: rgba(255,255,255,.7); -webkit-text-stroke: 1.4px rgba(190,190,190,.6); }
.mk-bai { position: absolute; left: 2px; top: 22px; font-size: 42px; font-family: "Liberation Sans", sans-serif; line-height: 42px; }
.mk-paw { position: absolute; left: 62px; top: 2px; }
.mk-jy { position: absolute; left: 117px; top: 25px; font-size: 29px; line-height: 32px; font-family: "Noto Sans CJK SC", sans-serif; }
.mk-url { position: absolute; left: 2px; top: 62px; font-size: 22px; line-height: 26px; font-family: "Liberation Sans", sans-serif; -webkit-text-stroke: .8px rgba(190,190,190,.6); }
</style>
